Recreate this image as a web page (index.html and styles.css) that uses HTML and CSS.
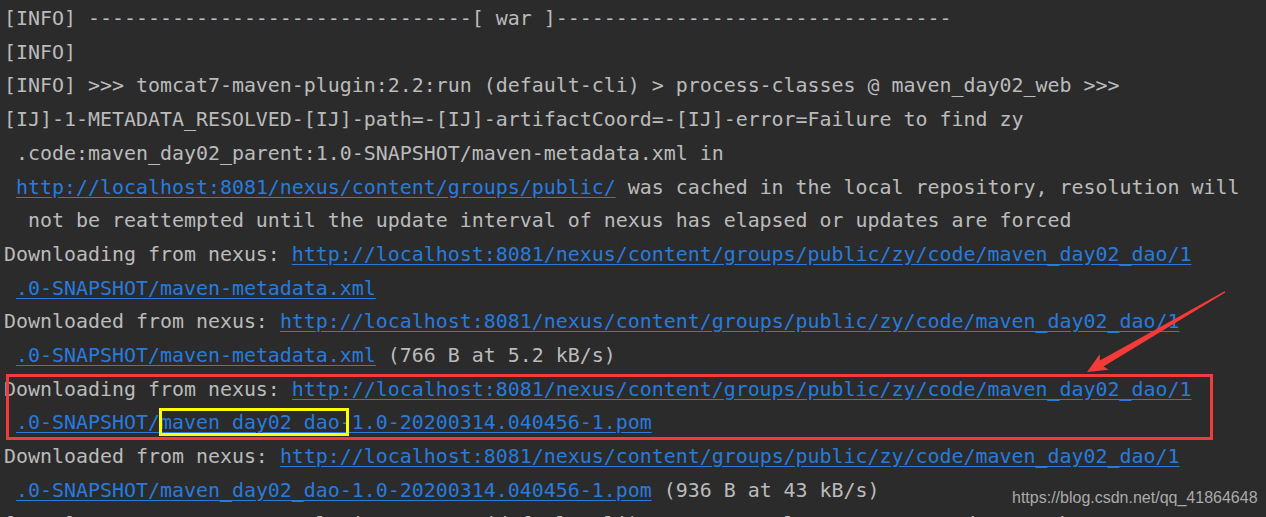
FILE: index.html
```html
<!DOCTYPE html>
<html lang="en">
<head>
    <meta charset="UTF-8">
    <title>Maven console</title>
    <link rel="stylesheet" href="styles.css">
</head>
<body>
    <div class="console">
        <div class="line">[INFO] --------------------------------[ war ]---------------------------------</div>
        <div class="line">[INFO]</div>
        <div class="line">[INFO] &gt;&gt;&gt; tomcat7-maven-plugin:2.2:run (default-cli) &gt; process-classes @ maven_day02_web &gt;&gt;&gt;</div>
        <div class="line">[IJ]-1-METADATA_RESOLVED-[IJ]-path=-[IJ]-artifactCoord=-[IJ]-error=Failure to find zy</div>
        <div class="line"> .code:maven_day02_parent:1.0-SNAPSHOT/maven-metadata.xml in</div>
        <div class="line"> <a class="link">http://localhost:8081/nexus/content/groups/public/</a> was cached in the local repository, resolution will</div>
        <div class="line">  not be reattempted until the update interval of nexus has elapsed or updates are forced</div>
        <div class="line">Downloading from nexus: <a class="link">http://localhost:8081/nexus/content/groups/public/zy/code/maven_day02_dao/1</a></div>
        <div class="line"> <a class="link">.0-SNAPSHOT/maven-metadata.xml</a></div>
        <div class="line">Downloaded from nexus: <a class="link">http://localhost:8081/nexus/content/groups/public/zy/code/maven_day02_dao/1</a></div>
        <div class="line"> <a class="link">.0-SNAPSHOT/maven-metadata.xml</a> (766 B at 5.2 kB/s)</div>
        <div class="line">Downloading from nexus: <a class="link">http://localhost:8081/nexus/content/groups/public/zy/code/maven_day02_dao/1</a></div>
        <div class="line"> <a class="link">.0-SNAPSHOT/maven_day02_dao-1.0-20200314.040456-1.pom</a></div>
        <div class="line">Downloaded from nexus: <a class="link">http://localhost:8081/nexus/content/groups/public/zy/code/maven_day02_dao/1</a></div>
        <div class="line"> <a class="link">.0-SNAPSHOT/maven_day02_dao-1.0-20200314.040456-1.pom</a> (936 B at 43 kB/s)</div>
        <div class="line">[INFO] &lt;&lt;&lt; tomcat7-maven-plugin:2.2:run (default-cli) &lt; process-classes @ maven_day02_web &lt;&lt;&lt;</div>
    </div>

    <!-- annotations drawn over the screenshot -->
    <div class="mark-red"></div>
    <div class="mark-yellow"></div>
    <svg class="arrow" width="1266" height="517" viewBox="0 0 1266 517">
        <polygon points="1087,372 1108.8,369.8 1103.5,366.5 1225.3,292.5 1224.6,291.3 1099.9,360.4 1099.8,354.2" fill="#f53a3a"/>
    </svg>
    <div class="watermark">https://blog.csdn.net/qq_41864648</div>
</body>
</html>
```

FILE: styles.css
```css
body {
    margin: 0;
    background: #2b2b2b;
    overflow: hidden;
    position: relative;
    height: 517px;
}
.console {
    padding: 2px 0 0 4px;
    font-family: 'DejaVu Sans Mono', monospace;
    font-size: 19.93px;
    line-height: 33.7px;
    color: #bbbbbb;
}
.line {
    white-space: pre;
}
.link {
    color: #287bde;
    text-decoration: underline;
    text-underline-offset: 3px;
}
.mark-red {
    position: absolute;
    left: 6px;
    top: 374px;
    width: 1201px;
    height: 60px;
    border: 3px solid #f53a3a;
}
.mark-yellow {
    position: absolute;
    left: 159px;
    top: 408px;
    width: 184px;
    height: 22px;
    border: 3px solid #ffff00;
}
.arrow {
    position: absolute;
    left: 0;
    top: 0;
}
.watermark {
    position: absolute;
    left: 1012px;
    top: 489px;
    font-family: 'Liberation Sans', Arial, sans-serif;
    font-size: 16px;
    color: #aaaaaa;
}
```
